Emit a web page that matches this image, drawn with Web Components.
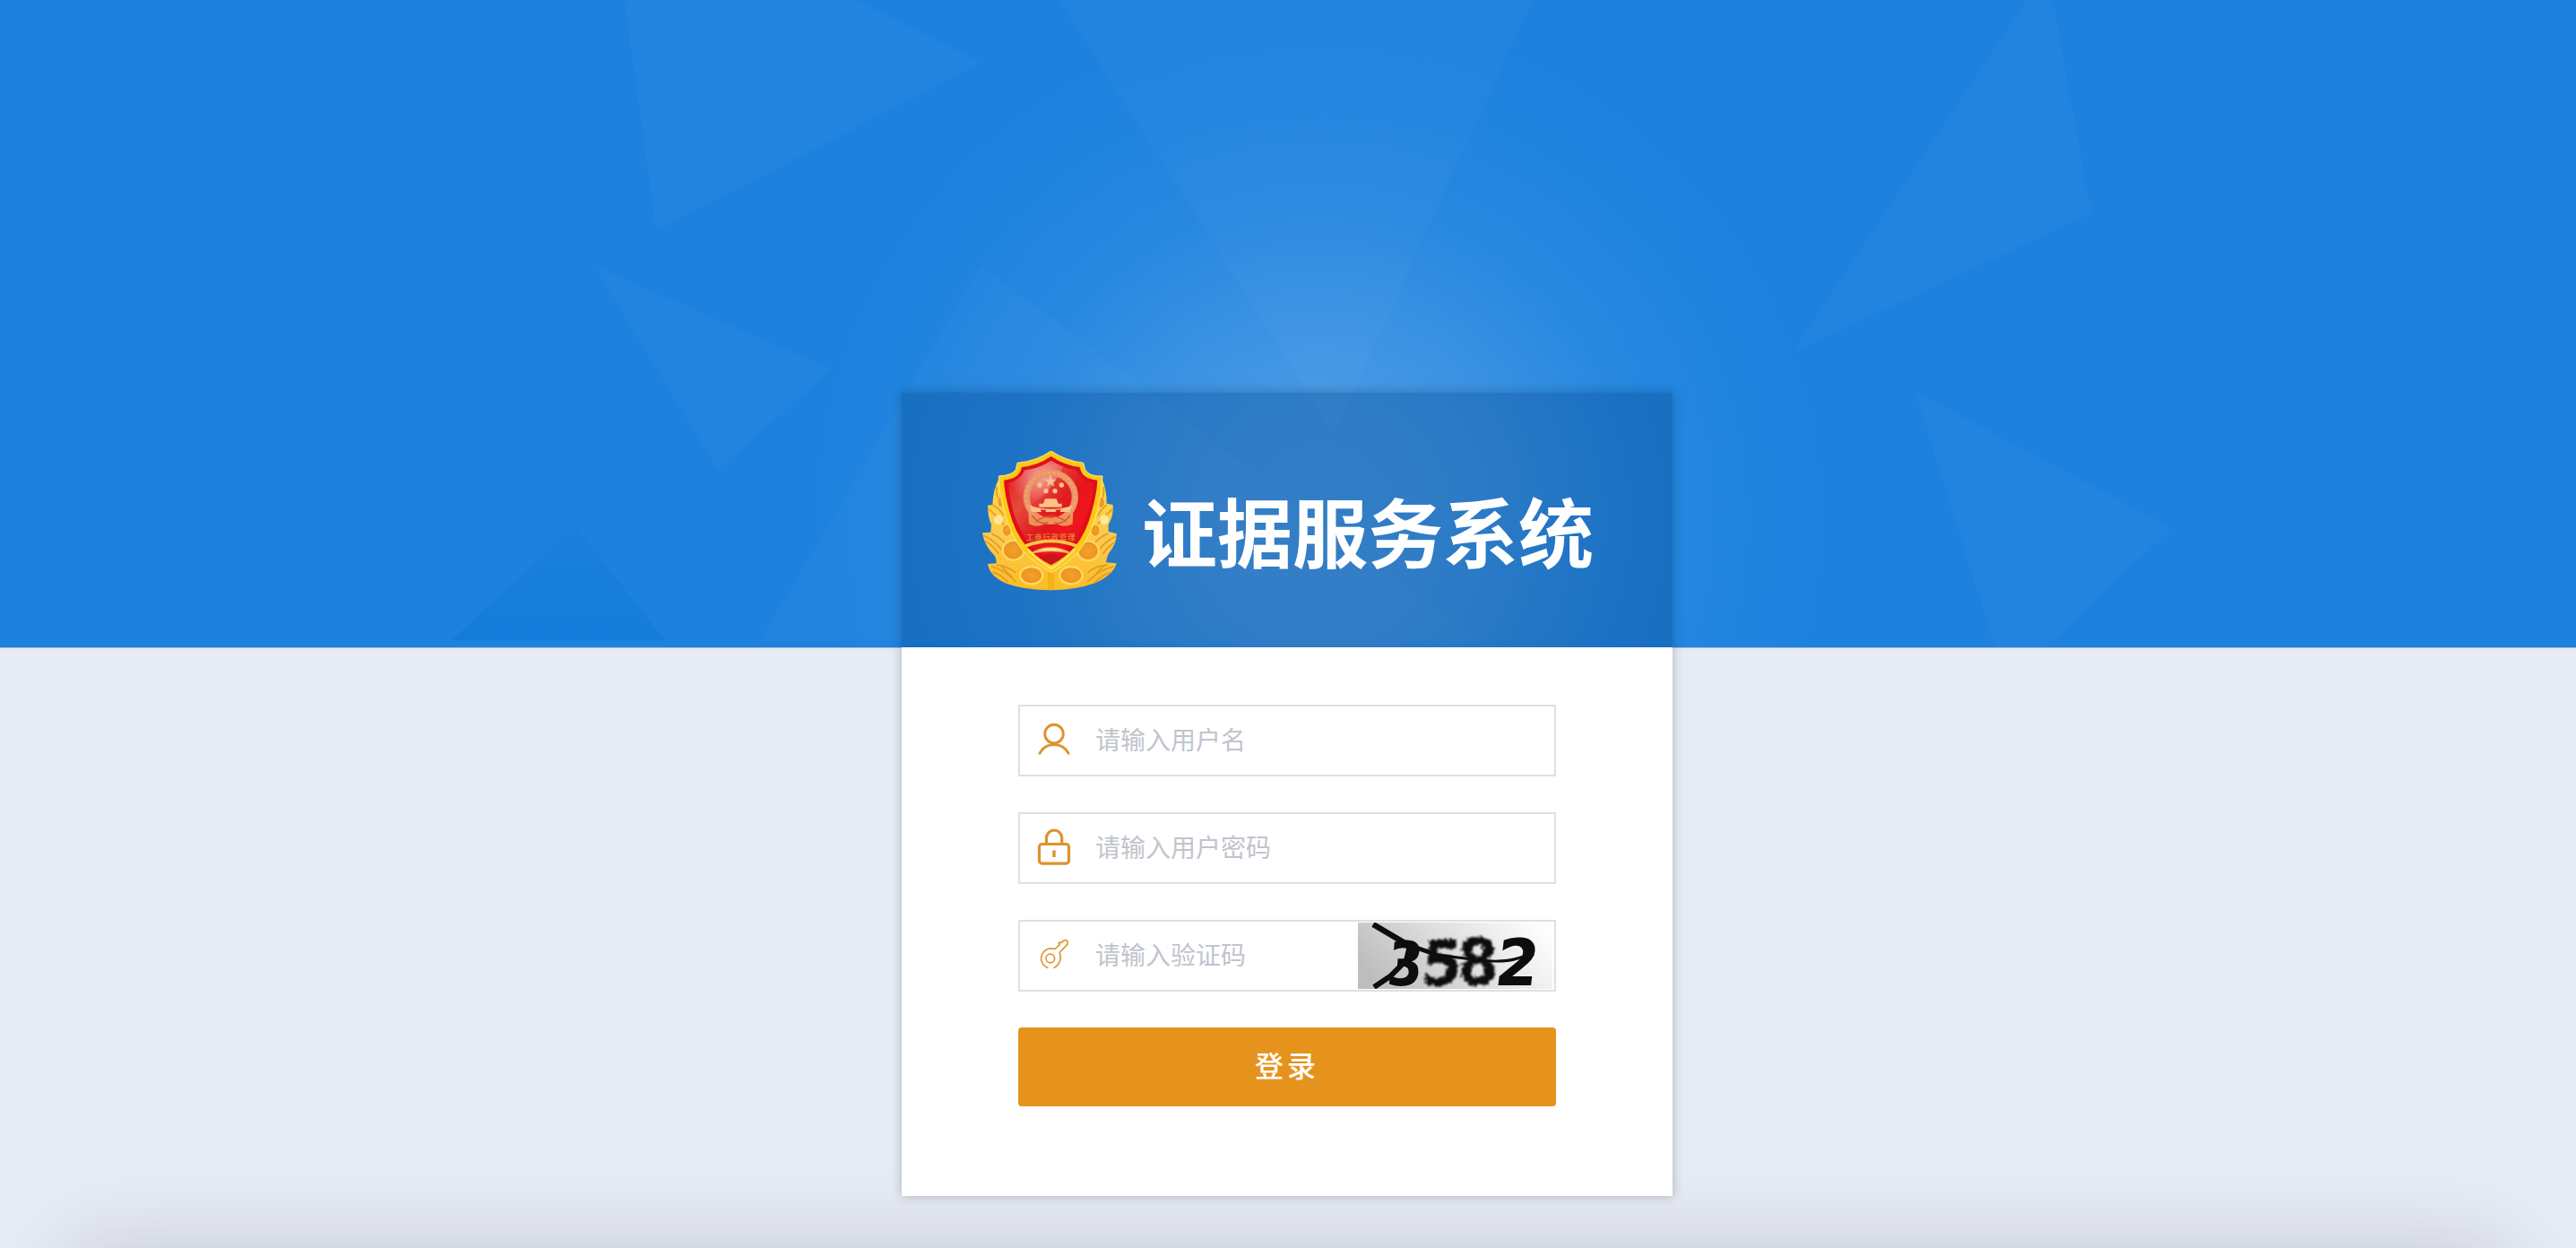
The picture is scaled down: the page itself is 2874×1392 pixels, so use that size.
<!DOCTYPE html>
<html lang="zh-CN">
<head>
<meta charset="utf-8">
<title>证据服务系统</title>
<style>
html,body{margin:0;height:100%;overflow:hidden;background:#e7ebf4;font-family:"Noto Sans CJK SC",sans-serif}
</style>
</head>
<body>
<login-page></login-page>
<script>
const define=(name,html)=>customElements.define(name,class extends HTMLElement{
  constructor(){super();this.attachShadow({mode:'open'}).innerHTML=html;}
});

define('sky-backdrop',`
<style>:host{display:block;width:2874px;height:722px;border-bottom:1px solid #a9c0e6}svg{display:block}</style>
<svg width="2874" height="722" viewBox="0 0 2874 722">
  <defs>
    <radialGradient id="g" gradientUnits="userSpaceOnUse" cx="1472" cy="580" r="575">
      <stop offset="0" stop-color="#fff" stop-opacity=".2"/>
      <stop offset=".2" stop-color="#fff" stop-opacity=".19"/>
      <stop offset=".4" stop-color="#fff" stop-opacity=".13"/>
      <stop offset=".6" stop-color="#fff" stop-opacity=".055"/>
      <stop offset=".8" stop-color="#fff" stop-opacity=".018"/>
      <stop offset="1" stop-color="#fff" stop-opacity="0"/>
    </radialGradient>
    <linearGradient id="d" x1="0" y1="0" x2="0" y2="1"><stop offset="0" stop-color="#1b80dd"/><stop offset="1" stop-color="#137cda"/></linearGradient>
  </defs>
  <rect width="2874" height="722" fill="#1d82df"/>
  <rect width="2874" height="722" fill="url(#g)"/>
  <g fill="#fff" fill-opacity=".023">
    <path d="M697 0H955L1095 70L732 257Z"/>
    <path d="M663 297L928 412L801 524Z"/>
    <path d="M1095 296L1648 715H848Z"/>
    <path d="M1182 0H1710L1488 484Z"/>
    <path d="M2262 0H2290L2333 238L2000 393Z"/>
    <path d="M2137 437L2423 589L2282 722H2226Z"/>
  </g>
  <path d="M642 587L742 714H504Z" fill="url(#d)"/>
</svg>`);

define('badge-emblem',`
<style>:host{display:block;width:150px;height:157px}svg{display:block}</style>
<svg width="150" height="157" viewBox="48 65 450 471">
  <defs>
    <linearGradient id="gold" x1="0" y1="0" x2="0" y2="1"><stop offset="0" stop-color="#ffd83a"/><stop offset=".5" stop-color="#fbc94e"/><stop offset="1" stop-color="#fbbd22"/></linearGradient>
    <linearGradient id="red" x1="0" y1="0" x2="1" y2="1"><stop offset="0" stop-color="#e01418"/><stop offset=".3" stop-color="#e64a3d"/><stop offset=".52" stop-color="#e01b20"/><stop offset=".7" stop-color="#f0131d"/><stop offset="1" stop-color="#c00f16"/></linearGradient>
    <radialGradient id="sh" cx=".6" cy=".3" r=".6"><stop offset="0" stop-color="#fff" stop-opacity=".5"/><stop offset="1" stop-color="#fff" stop-opacity="0"/></radialGradient>
    <radialGradient id="or"><stop offset="0" stop-color="#f3a02c"/><stop offset="1" stop-color="#eb921f"/></radialGradient>
    <filter id="soft" x="0" y="0" width="1" height="1"><feGaussianBlur stdDeviation="1.8"/></filter>
  </defs>
  <g filter="url(#soft)">
  <path d="M104 160Q84 195 82 248L66 250Q66 290 78 314L76 340L48 342Q54 385 90 420Q96 432 95 444L66 446Q72 488 130 512Q190 534 276 534Q360 534 425 510Q486 484 497 444L462 441Q464 425 470 412Q496 382 498 345L470 338L470 314Q488 285 485 248L464 244Q464 195 448 160Z" fill="url(#gold)"/>
  <g fill="none" stroke="#e29a2a" stroke-width="5" stroke-linecap="round">
    <path d="M84 250Q104 258 118 282M68 262Q92 280 122 318M55 352Q100 372 128 420M60 370Q84 386 102 412M80 345Q102 355 122 374M80 455Q120 465 160 505M96 450Q125 450 158 474M84 474Q110 480 132 506M110 452L148 492M462 250Q448 258 436 284M482 264Q458 284 430 318M492 355Q450 374 424 420M486 376Q466 392 452 412M468 345Q444 354 424 376M486 455Q440 466 400 505M466 450Q430 450 402 474M474 476Q446 484 424 508M452 454L414 496M96 190Q92 215 108 240M454 190Q456 216 446 240"/>
  </g>
  <g stroke="#ffd95c" stroke-width="7" fill="url(#or)">
    <ellipse cx="152" cy="400" rx="36" ry="33"/><ellipse cx="402" cy="402" rx="36" ry="33"/>
    <ellipse cx="212" cy="484" rx="38" ry="29"/><ellipse cx="345" cy="484" rx="38" ry="29"/>
    <ellipse cx="110" cy="238" rx="11" ry="18" stroke-width="3"/><ellipse cx="446" cy="240" rx="11" ry="18" stroke-width="3"/>
    <ellipse cx="130" cy="334" rx="16" ry="20" stroke-width="4"/><ellipse cx="426" cy="334" rx="16" ry="20" stroke-width="4"/>
  </g>
  <ellipse cx="102" cy="298" rx="15" ry="16" fill="#fff2b0" opacity=".8"/><ellipse cx="456" cy="298" rx="15" ry="16" fill="#fff2b0" opacity=".8"/>
  <path d="M278 474V532" stroke="#f3b218" stroke-width="22"/>
  <path d="M278 68Q230 102 165 108L160 130Q148 150 103 152Q102 205 122 270Q142 350 182 400Q224 446 280 474Q334 444 372 402Q412 350 432 270Q450 210 450 152Q404 154 392 130L386 108Q325 100 278 68Z" fill="#fdc913" stroke="#ffe68a" stroke-width="3"/>
  <path d="M278 86Q235 116 180 122L175 138Q162 162 120 166Q122 210 138 268Q156 340 196 388Q234 428 278 450Q324 426 358 388Q396 342 415 268Q432 205 433 166Q390 162 379 138L374 122Q322 116 278 86Z" fill="#e0101b"/>
  <path d="M278 100Q240 126 190 132Q178 164 134 176Q138 220 150 266Q168 330 204 376Q240 414 278 434Q318 412 350 378Q388 330 404 266Q418 215 420 176Q376 166 364 132Q318 126 278 100Z" fill="url(#red)"/>
  <path d="M278 100Q240 126 190 132Q178 164 134 176Q138 220 150 266Q250 260 320 120Q295 110 278 100Z" fill="url(#sh)"/>
  <circle cx="277" cy="222" r="81" fill="none" stroke="#ec9468" stroke-width="22"/>
  <circle cx="277" cy="222" r="82" fill="none" stroke="#f2ae74" stroke-width="4" stroke-dasharray="10 7"/>
  <g fill="#fbc486">
    <path d="M276 148L281 163H296L284 172L289 187L276 178L263 187L268 172L256 163H271Z"/>
    <circle cx="240" cy="182" r="8"/><circle cx="313" cy="182" r="8"/><circle cx="261" cy="202" r="8"/><circle cx="291" cy="202" r="8"/>
    <path d="M258 228H296L302 244H314V256H238V244H252Z"/>
    <path d="M206 250Q240 262 278 262Q316 262 350 250L340 272H214Z"/>
  </g>
  <path d="M202 276Q240 292 277 292Q314 292 352 276L350 312Q330 324 306 316Q290 304 277 304Q262 304 248 316Q224 324 204 312Z" fill="#ec9458"/>
  <path d="M242 264L262 266L252 282ZM292 266L312 264L302 282Z" fill="#e01820"/>
  <path d="M214 284Q240 318 268 308M342 284Q314 318 288 308M226 306Q250 286 277 286Q304 286 330 306" fill="none" stroke="#d9552f" stroke-width="4"/>
  <path d="M192 386Q278 352 364 386" fill="none" stroke="#fbc746" stroke-width="11"/>
  <path d="M216 408Q278 376 338 408Q306 402 278 402Q248 402 216 408Z" fill="#fde9c0" stroke="#f4b850" stroke-width="5"/>
  <path d="M242 426Q278 402 314 426Q296 440 278 448Q258 438 242 426Z" fill="#c9161c"/>
  <path d="M200 396Q240 440 279 462Q318 440 358 396" fill="none" stroke="#ffe27a" stroke-width="6"/>
  </g>
  <text x="195" y="366" font-family="Noto Sans CJK SC,sans-serif" font-weight="500" font-size="25" textLength="164" fill="#e58a3a">工商行政管理</text>
</svg>`);

define('brand-header',`
<style>
:host{display:flex;box-sizing:border-box;height:284px;padding:64px 0 0 90px;gap:28px;background:rgba(0,68,136,.33)}
h1{margin:29px 0 0;font-size:84px;line-height:120px;height:120px;font-weight:700;color:#fff;white-space:nowrap}
</style>
<badge-emblem></badge-emblem><h1><slot></slot></h1>`);

define('field-row',`
<style>
:host{display:flex;box-sizing:border-box;width:600px;height:80px;border:2px solid #dcdfe6;background:#fff;align-items:center;padding-left:18px}
.t{flex:1;margin:0 0 4px 26px;font-size:28px;line-height:40px;color:#c0c4cc}
::slotted(svg){display:block;flex:none}
</style>
<slot name="icon"></slot><span class="t"><slot></slot></span><slot name="extra"></slot>`);

define('captcha-image',`
<style>:host{display:block;width:217px;height:74px;margin-right:2px}svg{display:block;overflow:visible}text{font-family:"DejaVu Sans",sans-serif;font-weight:700}</style>
<svg width="217" height="74" viewBox="0 0 217 74">
  <defs>
    <linearGradient id="b" x1="0" x2="1" y1=".6" y2=".3"><stop offset="0" stop-color="#bdbdbd"/><stop offset=".5" stop-color="#dedede"/><stop offset="1" stop-color="#fdfdfd"/></linearGradient>
    <filter id="f" filterUnits="userSpaceOnUse" x="0" y="0" width="217" height="74"><feTurbulence type="fractalNoise" baseFrequency=".3 .25" numOctaves="2" seed="7"/><feDisplacementMap in="SourceGraphic" scale="8" xChannelSelector="R" yChannelSelector="G"/><feGaussianBlur stdDeviation=".8"/></filter>
    <filter id="s" filterUnits="userSpaceOnUse" x="0" y="0" width="217" height="74"><feGaussianBlur stdDeviation=".7"/></filter>
  </defs>
  <rect width="217" height="74" fill="url(#b)"/>
  <g filter="url(#s)" fill="#0a0a0a">
    <text transform="translate(31 70) skewX(-5) scale(.84 1)" font-size="68">3</text>
    <text transform="translate(151 70) skewX(-7) scale(.96 1)" font-size="72">2</text>
  </g>
  <g filter="url(#f)" fill="#0a0a0a">
    <text transform="translate(70 70) skewX(-4) scale(.92 1)" font-size="70">5</text>
    <text transform="translate(111 69) scale(.92 1)" font-size="71">8</text>
  </g>
  <g fill="none" stroke="#0a0a0a" filter="url(#s)">
    <path d="M17 2L56 25" stroke-width="6.5"/><path d="M54 24L85 35" stroke-width="5"/><path d="M83 35Q110 39 135 42Q162 45 178 40T196 37" stroke-width="3"/>
    <path d="M18 72L36 60L54 42L58 26" stroke-width="6"/>
  </g>
</svg>`);

define('submit-button',`
<style>
:host{display:block;width:600px;height:88px}
button{display:block;width:100%;height:100%;border:0;border-radius:4px;background:#e6931e;color:#fff;font:500 32px/82px "Noto Sans CJK SC",sans-serif;letter-spacing:4px;padding:0 0 6px}
</style>
<button><slot></slot></button>`);

define('login-card',`
<style>
:host{display:block;width:860px;height:896px;box-shadow:0 0 12px rgba(0,0,0,.24)}
.body{display:flex;flex-direction:column;box-sizing:border-box;height:612px;padding:64px 130px 0;gap:40px;background:#fff}
</style>
<slot name="header"></slot><div class="body"><slot></slot></div>`);

define('login-page',`
<style>
:host{display:grid;width:2874px;height:1392px;overflow:hidden;grid-template:1392px/2874px;color:#fff}
sky-backdrop,login-card,.edge{grid-area:1/1}
login-card{justify-self:center;margin:438px 2px 0 0}
.edge{align-self:end;height:400px;margin:0 80px -404px;box-shadow:0 0 90px rgba(0,0,0,.16)}
</style>
<sky-backdrop></sky-backdrop>
<div class="edge"></div>
<login-card>
  <brand-header slot="header">证据服务系统</brand-header>
  <field-row>
    <svg slot="icon" width="40" height="60" fill="none" stroke="#dd922d" stroke-width="2.9" stroke-linecap="round"><circle cx="20" cy="22.6" r="10.3"/><path d="M4 44.2A18 18 0 0 1 36 44.2"/></svg>
    请输入用户名
  </field-row>
  <field-row>
    <svg slot="icon" width="40" height="60" fill="none" stroke="#dd922d" stroke-width="3.2"><rect x="3.5" y="25.5" width="33" height="21.6" rx="3"/><path d="M11.5 25V18.6A8.6 8.6 0 0 1 28.7 18.6V25"/><path d="M20 32.5V40" stroke-width="3.4"/></svg>
    请输入用户密码
  </field-row>
  <field-row>
    <svg slot="icon" width="40" height="60" fill="none" stroke="#e09632" stroke-width="1.7" stroke-linejoin="round" stroke-linecap="round"><circle cx="15.8" cy="33" r="4.8"/><path d="M12.8 43.4A11.1 11.1 0 0 1 16 21.9Q19.4 21.8 21.2 22.5L26.3 17.6L25.2 16Q25.8 14.6 28 15.5L31 13Q33 12 34.8 13.6Q36.2 15.6 34.8 17.4L26.2 26.4Q28.4 33 25.3 38.5Q23.3 41.8 20 43.4"/></svg>
    请输入验证码
    <captcha-image slot="extra"></captcha-image>
  </field-row>
  <submit-button>登录</submit-button>
</login-card>`);
</script>
</body>
</html>
